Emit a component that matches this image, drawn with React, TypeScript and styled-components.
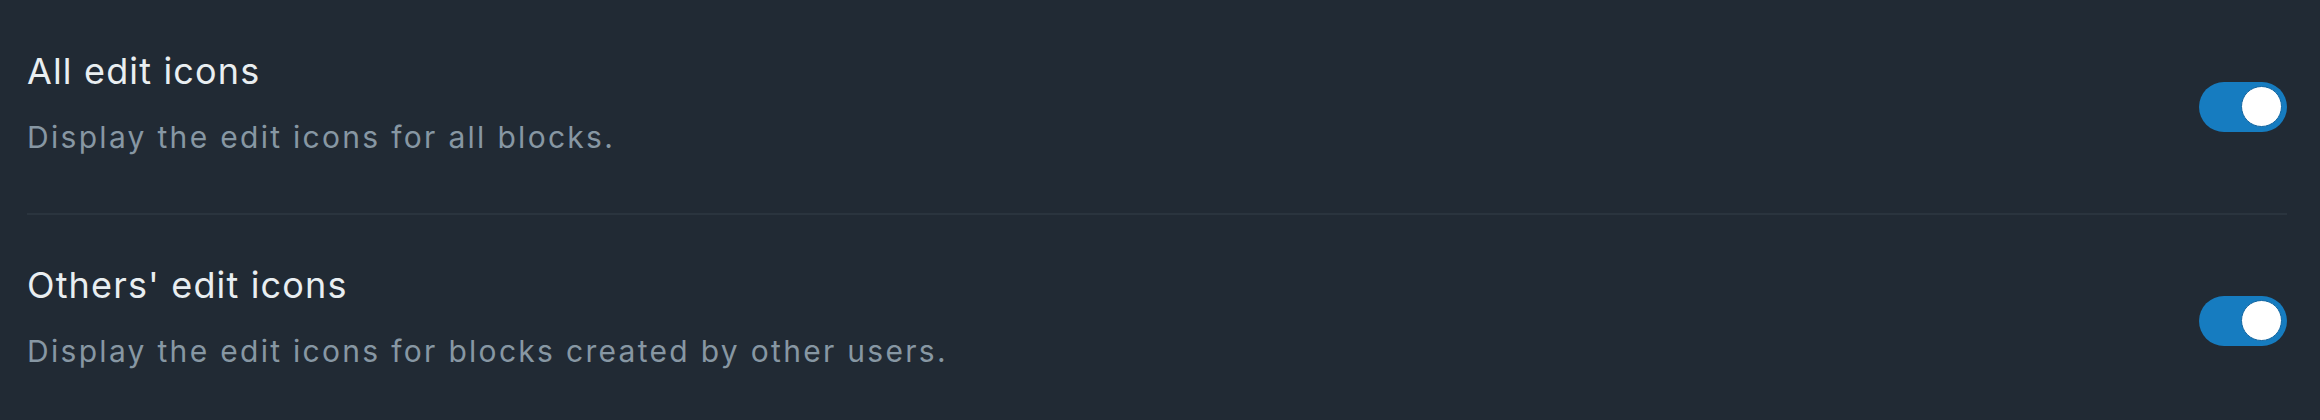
import styled, { createGlobalStyle } from 'styled-components';

const GlobalStyle = createGlobalStyle`
  html, body {
    margin: 0;
    padding: 0;
    background: #212a34;
  }
  body {
    font-family: Inter, "Noto Sans", "Liberation Sans", sans-serif;
    -webkit-font-smoothing: antialiased;
  }
`;

const Panel = styled.div`
  width: 2320px;
  height: 420px;
  overflow: hidden;
  box-sizing: border-box;
  padding: 0 33px 0 27px;
  background: #212a34;
`;

const Row = styled.div`
  display: flex;
  align-items: center;
  justify-content: space-between;
  height: 213px;
  box-sizing: border-box;
  padding-top: 49px;
  padding-bottom: 49px;

  & + & {
    border-top: 2px solid #2a343e;
  }
`;

const Copy = styled.div`
  display: flex;
  flex-direction: column;
  gap: 24px;
  padding-bottom: 7px;
`;

const Title = styled.div`
  color: #e9eef1;
  font-size: 36px;
  line-height: 44px;
  font-weight: 400;
  letter-spacing: 1.15px;
`;

const Description = styled.div`
  color: #8797a3;
  font-size: 30px;
  line-height: 40px;
  font-weight: 400;
  letter-spacing: 2.3px;
`;

const Track = styled.button<{ $on: boolean }>`
  flex: none;
  position: relative;
  width: 88px;
  height: 50px;
  padding: 0;
  border: none;
  border-radius: 25px;
  background: ${({ $on }) => ($on ? '#167cc0' : '#3a4651')};
  cursor: pointer;
  align-self: center;
  margin-top: -49px;
  margin-bottom: -49px;
`;

const Knob = styled.span<{ $on: boolean }>`
  position: absolute;
  top: 4px;
  left: ${({ $on }) => ($on ? '42px' : '4px')};
  width: 41px;
  height: 41px;
  box-sizing: border-box;
  border-radius: 50%;
  background: #ffffff;
  border: 1.5px solid #1265a0;
`;

const Toggle = ({ on }: { on: boolean }) => (
  <Track $on={on} role="switch" aria-checked={on}>
    <Knob $on={on} />
  </Track>
);

const settings = [
  { title: 'All edit icons', description: 'Display the edit icons for all blocks.', on: true },
  {
    title: "Others' edit icons",
    description: 'Display the edit icons for blocks created by other users.',
    on: true,
  },
];

export default function App() {
  return (
    <>
      <GlobalStyle />
      <Panel>
        {settings.map((s) => (
          <Row key={s.title}>
            <Copy>
              <Title>{s.title}</Title>
              <Description>{s.description}</Description>
            </Copy>
            <Toggle on={s.on} />
          </Row>
        ))}
      </Panel>
    </>
  );
}
